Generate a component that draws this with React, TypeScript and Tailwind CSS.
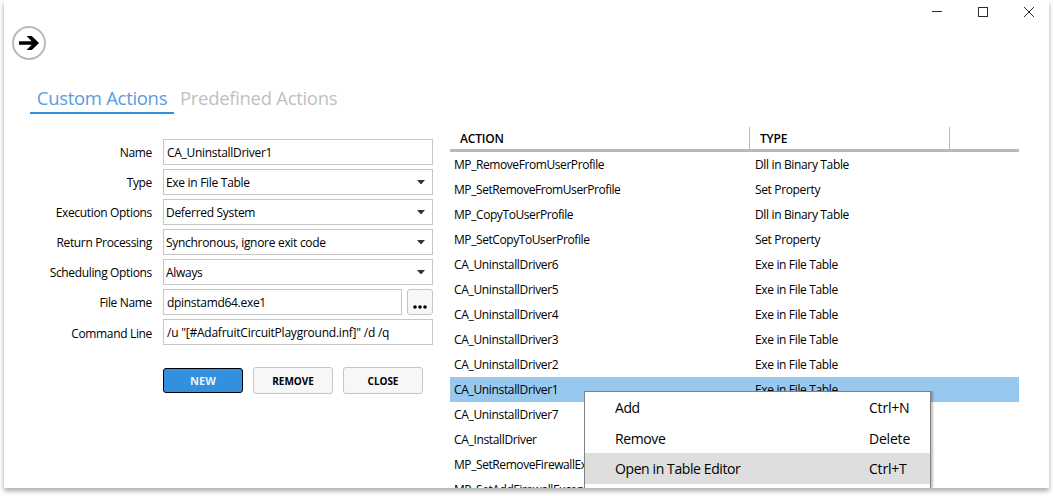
import { useState } from "react";

const actions = [
  { name: "MP_RemoveFromUserProfile", type: "Dll in Binary Table" },
  { name: "MP_SetRemoveFromUserProfile", type: "Set Property" },
  { name: "MP_CopyToUserProfile", type: "Dll in Binary Table" },
  { name: "MP_SetCopyToUserProfile", type: "Set Property" },
  { name: "CA_UninstallDriver6", type: "Exe in File Table" },
  { name: "CA_UninstallDriver5", type: "Exe in File Table" },
  { name: "CA_UninstallDriver4", type: "Exe in File Table" },
  { name: "CA_UninstallDriver3", type: "Exe in File Table" },
  { name: "CA_UninstallDriver2", type: "Exe in File Table" },
  { name: "CA_UninstallDriver1", type: "Exe in File Table" },
  { name: "CA_UninstallDriver7", type: "" },
  { name: "CA_InstallDriver", type: "" },
  { name: "MP_SetRemoveFirewallException", type: "" },
  { name: "MP_SetAddFirewallException", type: "" },
];

const menu = [
  { label: "Add", keys: "Ctrl+N", className: "h-[30px] leading-[29px]" },
  { label: "Remove", keys: "Delete", className: "h-[30px] leading-[31px]" },
  { label: "Open in Table Editor", keys: "Ctrl+T", className: "h-[31px] bg-[#dedede] leading-[31px]" },
];

function Field({ label, children }: any) {
  return (
    <div className="flex h-[26px] items-center">
      <div className="w-[148px] pt-0.5 text-right tracking-[-0.34px]">{label}</div>
      <div className="ml-[11px] flex h-full w-[270px] gap-[5px]">{children}</div>
    </div>
  );
}

function TextBox({ value }: { value: string }) {
  return (
    <div className="flex-1 border border-[#c6c6c6] pl-[3px] leading-[26px] whitespace-pre">{value}</div>
  );
}

function Select({ value }: { value: string }) {
  return (
    <div className="flex flex-1 items-center justify-between border border-[#c6c6c6] pr-[7px] pl-[2px]">
      <span className="h-6 leading-[26px]">{value}</span>
      <svg width="8" height="4" viewBox="0 0 8 4" className="mb-px">
        <path d="M0 0h8L4.5 4h-1z" fill="#333" />
      </svg>
    </div>
  );
}

function WindowButtons() {
  return (
    <div className="flex h-6 items-center justify-end gap-9 pr-[15px] text-[#2b2b2b]">
      <svg width="10" height="10" className="shrink-0" shapeRendering="crispEdges">
        <path d="M0 4.5h10" stroke="currentColor" />
      </svg>
      <svg width="10" height="10" className="shrink-0" shapeRendering="crispEdges">
        <rect x="0.5" y="0.5" width="9" height="9" fill="none" stroke="currentColor" />
      </svg>
      <svg width="10" height="10" className="shrink-0">
        <path d="M0 0l10 10M10 0L0 10" stroke="currentColor" />
      </svg>
    </div>
  );
}

export default function App() {
  const [selected, setSelected] = useState("CA_UninstallDriver1");

  return (
    <div className="h-[496px] w-[1053px] overflow-hidden bg-white px-1 font-['Open_Sans',sans-serif] text-xs text-black">
      <div className="relative h-[488px] bg-white shadow-[0_3px_5px_rgba(0,0,0,0.34)]">
        <div className="flex h-full flex-col overflow-hidden">
          <WindowButtons />

          <div className="mt-0.5 ml-2 flex size-[34px] items-center justify-center rounded-full border-2 border-[#bababa]">
            <svg width="20" height="14" viewBox="0 0 20 14">
              <path d="M0 5.2h12.6L7.6 0h5.2L20 7l-7.2 7H7.6l5-5.2H0z" />
            </svg>
          </div>

          <div className="mt-[24px] ml-[26px] flex h-[30px] text-[18.5px] leading-[28px]">
            <div className="w-36 border-b-2 border-[#3390df] text-center tracking-[-0.3px] text-[#5b9bdf]">
              Custom Actions
            </div>
            <div className="ml-1.5 tracking-[-0.3px] whitespace-nowrap text-[#bfbfbf]">Predefined Actions</div>
          </div>

          <div className="flex flex-1 overflow-hidden">
            <div className="w-[429px] shrink-0 pt-[25px] tracking-[-0.3px]">
              <div className="flex flex-col gap-1">
                <Field label="Name"><TextBox value="CA_UninstallDriver1" /></Field>
                <Field label="Type"><Select value="Exe in File Table" /></Field>
                <Field label="Execution Options"><Select value="Deferred System" /></Field>
                <Field label="Return Processing"><Select value="Synchronous, ignore exit code" /></Field>
                <Field label="Scheduling Options"><Select value="Always" /></Field>
                <Field label="File Name">
                  <TextBox value="dpinstamd64.exe1" />
                  <button className="flex w-[26px] items-end justify-center rounded-[3px] border border-[#c6c6c6] bg-[#f7f7f7] pb-[5px]">
                    <svg width="14" height="4" viewBox="0 0 14 4">
                      <circle cx="2" cy="2" r="1.8" />
                      <circle cx="7" cy="2" r="1.8" />
                      <circle cx="12" cy="2" r="1.8" />
                    </svg>
                  </button>
                </Field>
                <Field label={<span className="block pt-0.5">Command Line</span>}>
                  <div className="flex flex-1 tracking-[-0.23px]">
                    <TextBox value={'/u "[#AdafruitCircuitPlayground.inf]" /d /q'} />
                  </div>
                </Field>
              </div>

              <div className="mt-[22px] ml-[159px] flex items-center gap-2.5 font-bold">
                <button className="h-[25px] w-20 rounded-[3px] border border-black bg-[#3390df] pt-0.5 text-[11px] tracking-[0.1px] text-[#e8f3fc]">NEW</button>
                <button className="h-[27px] w-20 rounded-[3px] border border-[#c6c6c6] bg-[#f7f7f7] pt-[3px] text-[10px] tracking-[-0.05px]">REMOVE</button>
                <button className="h-[27px] w-20 rounded-[3px] border border-[#c6c6c6] bg-[#f7f7f7] pt-[3px] text-[10px] tracking-[-0.05px]">CLOSE</button>
              </div>
            </div>

            <div className="ml-[17px] w-[569px] shrink-0 pt-[13px]">
              <div className="flex h-[25px] border-b-3 border-[#b9b9b9] leading-[23px] font-semibold tracking-[-0.2px]">
                <div className="w-[300px] border-r border-[#b9b9b9] pl-2.5">ACTION</div>
                <div className="w-[200px] border-r border-[#b9b9b9] pl-2.5">TYPE</div>
              </div>
              {actions.map((a) => (
                <div
                  key={a.name}
                  onClick={() => setSelected(a.name)}
                  className={
                    a.name === selected
                      ? "flex h-[25px] bg-[#99c8ef] pl-1 leading-[25px]"
                      : "flex h-[25px] pl-1 leading-[25px]"
                  }
                >
                  <span
                    className={
                      a.name.startsWith("MP_")
                        ? "w-[301px] shrink-0 tracking-[-0.42px]"
                        : "w-[301px] shrink-0 tracking-[-0.34px]"
                    }
                  >
                    {a.name}
                  </span>
                  <span className="tracking-[-0.35px]">{a.type}</span>
                </div>
              ))}
            </div>
          </div>
        </div>

        {/* context menu, cut off by the window's bottom edge */}
        <div className="absolute top-[391px] left-[580px] h-[97px] w-[347px] border border-b-0 border-[#808080] bg-white pt-px text-sm tracking-[-0.4px] shadow-[2px_0_2px_rgba(0,0,0,0.25)] [clip-path:inset(0_-6px_0_0)]">
          {menu.map((m) => (
            <div key={m.label} className={`flex pl-[30px] ${m.className}`}>
              <span className="w-[254px]">{m.label}</span>
              <span className="tracking-[-0.2px]">{m.keys}</span>
            </div>
          ))}
        </div>
      </div>
    </div>
  );
}
